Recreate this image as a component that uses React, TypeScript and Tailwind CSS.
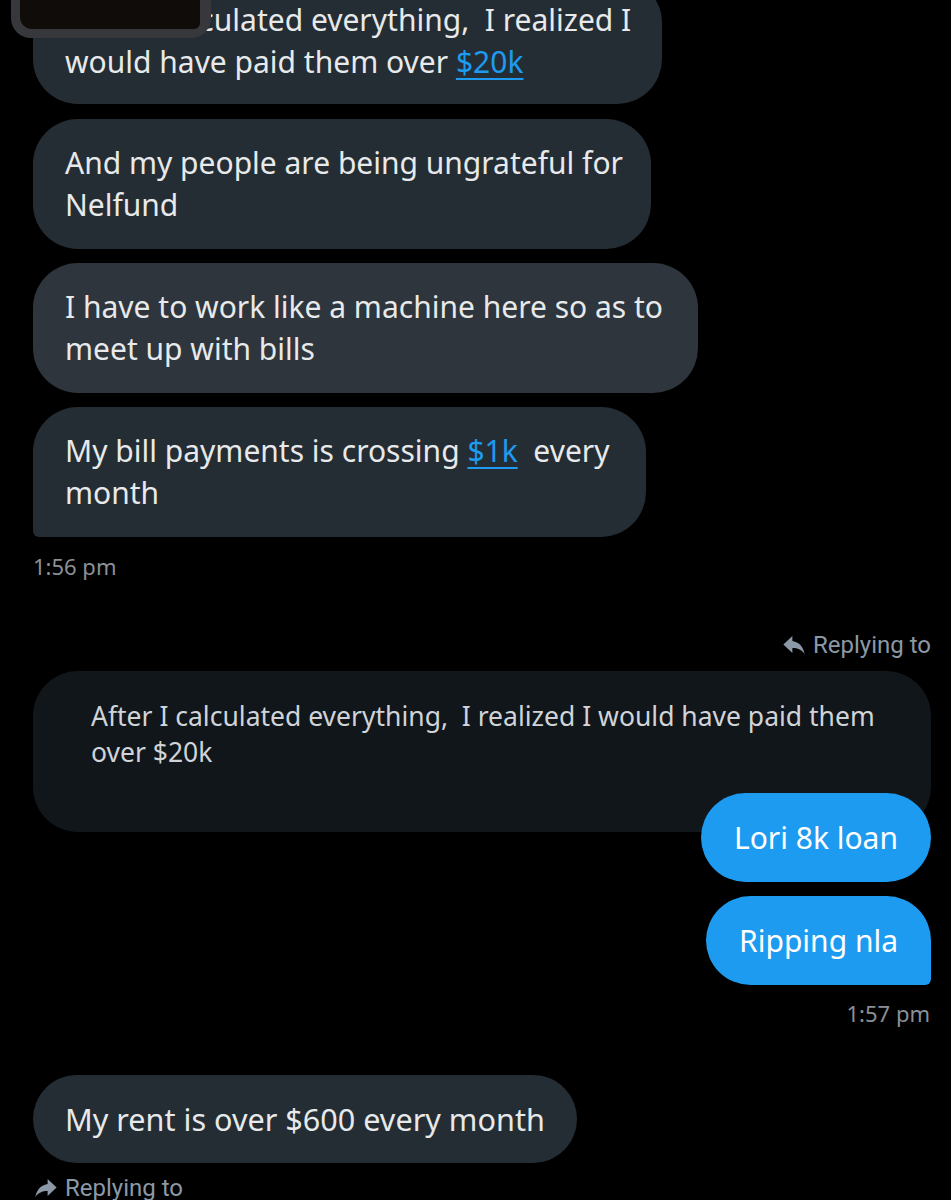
import React from "react";

const ReplyIcon = ({ flip = false }: { flip?: boolean }) => (
  <svg
    viewBox="0 0 24 24"
    className={flip ? "w-[26px] h-[26px] -scale-x-100" : "w-[26px] h-[26px]"}
    fill="#8b98a5"
  >
    <path d="M10.5 8.2V3.8L2.2 11.6l8.3 7.8v-4.6c5 0 8.7 1.6 11.3 5.6-.8-5.6-4.2-11.2-11.3-12.2z" />
  </svg>
);

const Link = ({ children }: { children: React.ReactNode }) => (
  <span className="text-[#1d9bf0] underline decoration-[2px] underline-offset-[5px]">{children}</span>
);

export default function App() {
  return (
    <div
      className="w-[951px] h-[1200px] bg-black overflow-hidden relative text-[#e7e9ea]"
      style={{ fontFamily: "'Noto Sans', Roboto, sans-serif" }}
    >
      <div className="flex flex-col items-start px-[33px] mt-[-22px]">
        {/* bubble 1 */}
        <div className="bg-[#252d34] rounded-[45px] px-[32px] py-[21px] text-[30px] leading-[42px] w-[629px] whitespace-pre">
          {"After I calculated everything,  I realized I\nwould have paid them over "}
          <Link>$20k</Link>
        </div>
        {/* bubble 2 */}
        <div className="mt-[15px] bg-[#252d34] rounded-[45px] px-[32px] py-[23px] text-[30px] leading-[42px] w-[618px] whitespace-pre">
          {"And my people are being ungrateful for\nNelfund"}
        </div>
        {/* bubble 3 */}
        <div className="mt-[14px] bg-[#2e353c] rounded-[45px] px-[32px] py-[23px] text-[30px] leading-[42px] w-[665px] whitespace-pre">
          {"I have to work like a machine here so as to\nmeet up with bills"}
        </div>
        {/* bubble 4 */}
        <div className="mt-[14px] bg-[#252d34] rounded-[45px] rounded-bl-[6px] px-[32px] py-[23px] text-[30px] leading-[42px] w-[613px] whitespace-pre">
          {"My bill payments is crossing "}
          <Link>$1k</Link>
          {"  every\nmonth"}
        </div>
        <div className="mt-[15px] text-[22px] leading-[28px] text-[#8b9096]">1:56 pm</div>
      </div>

      {/* outgoing group */}
      <div className="flex flex-col items-end px-[20px] mt-[50px]">
        <div
          className="flex items-center gap-[6px] text-[24px] leading-[30px] text-[#8b98a5]"
          style={{ fontFamily: "Roboto, sans-serif" }}
        >
          <ReplyIcon />
          <span>Replying to</span>
        </div>
        <div className="mt-[11px] self-stretch ml-[13px] bg-[#11161b] rounded-[45px] h-[161px] pl-[58px] pr-[30px] pt-[27px] text-[26.5px] leading-[36px] text-[#d0d4d8] whitespace-pre">
          {"After I calculated everything,  I realized I would have paid them\nover $20k"}
        </div>
        <div className="mt-[-39px] bg-[#1d9bf0] rounded-[45px] px-[33px] py-[23px] text-[30px] leading-[43px] text-white">
          Lori 8k loan
        </div>
        <div className="mt-[14px] bg-[#1d9bf0] rounded-[45px] rounded-br-[6px] px-[33px] py-[23px] text-[30px] leading-[43px] text-white">
          Ripping nla
        </div>
        <div className="mt-[14px] pr-[1px] text-[22px] leading-[28px] text-[#8b9096]">1:57 pm</div>
      </div>

      <div className="flex flex-col items-start px-[33px] mt-[48px]">
        <div className="bg-[#252d34] rounded-[45px] px-[32px] py-[23px] text-[30.6px] leading-[42px]">
          My rent is over $600 every month
        </div>
        <div
          className="mt-[10px] flex items-center gap-[6px] text-[24px] leading-[30px] text-[#8b98a5]"
          style={{ fontFamily: "Roboto, sans-serif" }}
        >
          <ReplyIcon flip />
          <span>Replying to</span>
        </div>
      </div>

      {/* redaction overlay */}
      <div className="absolute left-[11px] top-0 w-[200px] h-[38px] bg-[#36383b] rounded-b-[20px]">
        <div className="ml-[9px] w-[180px] h-[29px] bg-[#0f0c09] rounded-bl-[12px] rounded-br-[6px]" />
      </div>
    </div>
  );
}
